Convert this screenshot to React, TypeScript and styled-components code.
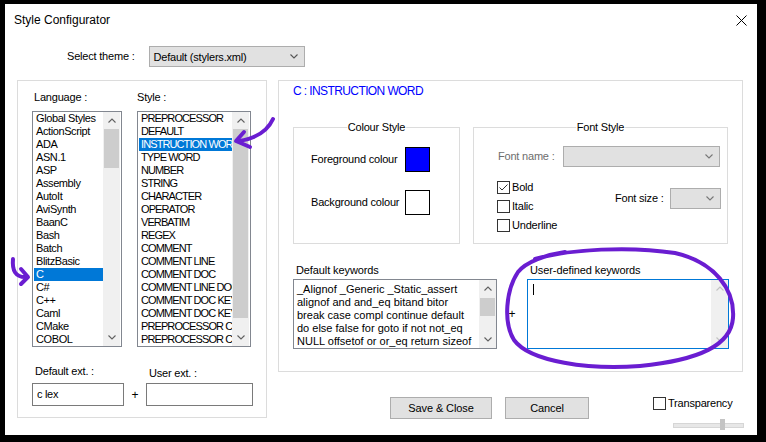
import React from "react";
import styled, { createGlobalStyle } from "styled-components";

const FONT = `"Liberation Sans", Arial, sans-serif`;

const Global = createGlobalStyle`
  html, body { margin: 0; padding: 0; background: #000; }
  body { font-family: ${FONT}; font-size: 11px; color: #000; }
  * { box-sizing: border-box; }
`;

const Dialog = styled.div`
  position: relative;
  margin: 4px 0 0 5px;
  width: 752px;
  height: 431px;
  background: #fff;
  display: flex;
  flex-direction: column;
`;

const TitleBar = styled.div`
  height: 32px;
  flex: none;
  display: flex;
  align-items: center;
  justify-content: space-between;
  padding: 0 10px 0 9px;
  font-size: 12px;
`;

const CloseIcon = () => (
  <svg width="11" height="11" viewBox="0 0 11 11">
    <path d="M0.5 0.5 L10.5 10.5 M10.5 0.5 L0.5 10.5" stroke="#000" strokeWidth="1" />
  </svg>
);

const ThemeRow = styled.div`
  margin-top: 10px;
  height: 21px;
  flex: none;
  display: flex;
  align-items: center;
  gap: 14px;
  padding-left: 62px;
`;

const Label = styled.span<{ $muted?: boolean }>`
  line-height: 13px;
  letter-spacing: -0.2px;
  white-space: nowrap;
  color: ${(p) => (p.$muted ? "#6d6d6d" : "#000")};
`;

const Combo = styled.div<{ $w: number }>`
  width: ${(p) => p.$w}px;
  height: 21px;
  background: #e1e1e1;
  border: 1px solid #adadad;
  display: flex;
  align-items: center;
  justify-content: space-between;
  padding: 0 6px 0 4px;
  letter-spacing: -0.2px;
`;

const Chevron = ({ up, color = "#555" }: { up?: boolean; color?: string }) => (
  <svg width="8" height="5" viewBox="0 0 8 5">
    <polyline
      points={up ? "0.5,4.5 4,1 7.5,4.5" : "0.5,0.5 4,4 7.5,0.5"}
      fill="none"
      stroke={color}
      strokeWidth="1.1"
    />
  </svg>
);

const Body = styled.div`
  margin-top: 13px;
  display: grid;
  grid-template-columns: 250px 465px;
  column-gap: 11px;
  padding-left: 12px;
  align-items: start;
`;

const LeftPanel = styled.div`
  height: 338px;
  border: 1px solid #dcdcdc;
  padding: 10px 0 0 14px;
`;

const ListsGrid = styled.div`
  display: grid;
  grid-template-columns: 90px 114px;
  column-gap: 15px;
  row-gap: 7px;
`;

const ListLabel = styled(Label)<{ $shift: number }>`
  padding-left: ${(p) => p.$shift}px;
`;

const ListBox = styled.div<{ $tight?: boolean }>`
  height: 236px;
  border: 1px solid #828790;
  padding: 0 1px;
  display: flex;
  overflow: hidden;
  letter-spacing: ${(p) => (p.$tight ? "-0.9px" : "-0.4px")};
`;

const Items = styled.div`
  flex: 1;
  min-width: 0;
  overflow: hidden;
`;

const Item = styled.div<{ $selected?: boolean }>`
  height: 13px;
  line-height: 13px;
  padding-left: 2px;
  white-space: nowrap;
  overflow: hidden;
  background: ${(p) => (p.$selected ? "#0078d7" : "transparent")};
  color: ${(p) => (p.$selected ? "#fff" : "#000")};
`;

const ScrollBar = styled.div`
  width: 17px;
  flex: none;
  display: flex;
  flex-direction: column;
  background: #f0f0f0;
`;

const ScrollButton = styled.div`
  height: 17px;
  flex: none;
  display: flex;
  align-items: center;
  justify-content: center;
`;

const Track = styled.div`
  flex: 1;
  min-height: 0;
`;

const Thumb = styled.div<{ $top: number; $height: number }>`
  margin: ${(p) => p.$top}px 1px 0;
  height: ${(p) => p.$height}px;
  background: #cdcdcd;
`;

const Scroll = ({
  top,
  height,
  disabled,
}: {
  top?: number;
  height?: number;
  disabled?: boolean;
}) => (
  <ScrollBar>
    <ScrollButton>
      <Chevron up color={disabled ? "#c2c2c2" : "#606060"} />
    </ScrollButton>
    <Track>{!disabled && <Thumb $top={top ?? 0} $height={height ?? 20} />}</Track>
    <ScrollButton>
      <Chevron color={disabled ? "#c2c2c2" : "#606060"} />
    </ScrollButton>
  </ScrollBar>
);

const ExtGrid = styled.div`
  margin-top: 18px;
  display: grid;
  grid-template-columns: 92px 22px 107px;
  grid-template-rows: 15px 23px;
  row-gap: 3px;
  align-items: start;
`;

const ExtLabel = styled(Label)<{ $down?: number }>`
  padding-left: 3px;
  margin-top: ${(p) => p.$down ?? 0}px;
`;

const TextInput = styled.div`
  height: 23px;
  border: 1px solid #7a7a7a;
  padding-left: 4px;
  line-height: 20px;
  letter-spacing: -0.3px;
`;

const Plus = styled.span`
  align-self: center;
  justify-self: center;
  font-size: 12px;
`;

const RightColumn = styled.div`
  display: flex;
  flex-direction: column;
`;

const RightPanel = styled.div`
  height: 292px;
  border: 1px solid #dcdcdc;
  padding: 3px 0 0 14px;
`;

const StyleTitle = styled.div`
  color: #0000ff;
  font-size: 12px;
  line-height: 14px;
  letter-spacing: -0.6px;
`;

const GroupsRow = styled.div`
  margin-top: 29px;
  display: flex;
  gap: 13px;
`;

const Group = styled.div<{ $w: number }>`
  position: relative;
  width: ${(p) => p.$w}px;
  height: 117px;
  border: 1px solid #dcdcdc;
`;

const GroupCaption = styled.span`
  position: absolute;
  top: -7px;
  left: 50%;
  transform: translateX(-50%);
  padding: 0 1px;
  background: #fff;
  line-height: 13px;
  letter-spacing: -0.2px;
  white-space: nowrap;
`;

const ColourGrid = styled.div`
  margin: 19px 0 0 17px;
  display: grid;
  grid-template-columns: 94px 25px;
  row-gap: 18px;
  align-items: center;
`;

const Swatch = styled.div<{ $color: string }>`
  width: 25px;
  height: 25px;
  border: 1px solid #000;
  background: ${(p) => p.$color};
`;

const FontNameRow = styled.div`
  margin: 18px 0 0 24px;
  display: grid;
  grid-template-columns: 65px 157px;
  align-items: center;
`;

const FontLower = styled.div`
  margin-top: 14px;
  display: flex;
  padding: 0 6px 0 23px;
  align-items: flex-start;
`;

const CheckColumn = styled.div`
  display: flex;
  flex-direction: column;
  gap: 6px;
`;

const CheckRow = styled.div`
  display: flex;
  align-items: center;
  gap: 2px;
  height: 13px;
`;

const Box = styled.div`
  width: 13px;
  height: 13px;
  border: 1px solid #333;
  background: #fff;
  display: flex;
  align-items: center;
  justify-content: center;
`;

const Check = ({ checked, label }: { checked?: boolean; label: string }) => (
  <CheckRow>
    <Box>
      {checked && (
        <svg width="11" height="11" viewBox="0 0 11 11">
          <polyline points="1.5,5.5 4,8 9.5,2.5" fill="none" stroke="#333" strokeWidth="1" />
        </svg>
      )}
    </Box>
    <Label>{label}</Label>
  </CheckRow>
);

const SizeRow = styled.div`
  margin: 7px 0 0 auto;
  display: grid;
  grid-template-columns: 55px 51px;
  align-items: center;
`;

const KeywordsGrid = styled.div`
  margin-top: 20px;
  display: grid;
  grid-template-columns: 204px 30px 202px;
  grid-template-rows: 13px 70px;
  row-gap: 2px;
`;

const KwLabel = styled(Label)`
  padding-left: 3px;
  letter-spacing: -0.1px;
`;

const KeywordBox = styled.div<{ $focused?: boolean }>`
  height: 70px;
  border: 1px solid ${(p) => (p.$focused ? "#0078d7" : "#828790")};
  display: flex;
  background: #fff;
`;

const KeywordText = styled.div`
  flex: 1;
  min-width: 0;
  padding: 3px 0 0 3px;
  overflow: hidden;
  line-height: 13px;
  white-space: nowrap;
`;

const Caret = styled.div`
  width: 1px;
  height: 11px;
  margin: 1px 0 0 2px;
  background: #000;
`;

const BottomBar = styled.div`
  display: flex;
  align-items: flex-start;
  padding: 25px 0 0 112px;
  gap: 13px;
`;

const Button = styled.button<{ $w: number }>`
  width: ${(p) => p.$w}px;
  height: 22px;
  padding: 0;
  background: #e1e1e1;
  border: 1px solid #adadad;
  font-family: ${FONT};
  font-size: 11px;
  letter-spacing: -0.1px;
  color: #000;
`;

const TransparencyBox = styled.div`
  margin: 0 -1px 0 auto;
  width: 91px;
  display: flex;
  flex-direction: column;
  gap: 9px;
`;

const Slider = styled.div`
  position: relative;
  margin-left: 20px;
  width: 71px;
  height: 11px;
  padding-top: 4px;
`;

const SliderTrack = styled.div`
  height: 5px;
  background: #e7e7e7;
  border: 1px solid #d6d6d6;
`;

const SliderThumb = styled.div`
  position: absolute;
  left: 47px;
  top: 0;
  width: 5px;
  height: 11px;
  background: #c4c4c4;
`;

const Annotations = styled.svg`
  position: absolute;
  left: -5px;
  top: -4px;
  pointer-events: none;
`;

const languages = [
  "Global Styles",
  "ActionScript",
  "ADA",
  "ASN.1",
  "ASP",
  "Assembly",
  "AutoIt",
  "AviSynth",
  "BaanC",
  "Bash",
  "Batch",
  "BlitzBasic",
  "C",
  "C#",
  "C++",
  "Caml",
  "CMake",
  "COBOL",
];

const styles = [
  "PREPROCESSOR",
  "DEFAULT",
  "INSTRUCTION WORD",
  "TYPE WORD",
  "NUMBER",
  "STRING",
  "CHARACTER",
  "OPERATOR",
  "VERBATIM",
  "REGEX",
  "COMMENT",
  "COMMENT LINE",
  "COMMENT DOC",
  "COMMENT LINE DOC",
  "COMMENT DOC KEYWORD",
  "COMMENT DOC KEYWORD ERROR",
  "PREPROCESSOR COMMENT",
  "PREPROCESSOR COMMENT DOC",
];

const keywordLines = [
  "_Alignof _Generic _Static_assert",
  "alignof and and_eq bitand bitor",
  "break case compl continue default",
  "do else false for goto if not not_eq",
  "NULL offsetof or or_eq return sizeof",
];

const PURPLE = "#6a1dd1";

export default function App() {
  return (
    <>
      <Global />
      <Dialog>
        <TitleBar>
          <span>Style Configurator</span>
          <CloseIcon />
        </TitleBar>
        <ThemeRow>
          <Label>Select theme :</Label>
          <Combo $w={156}>
            <span>Default (stylers.xml)</span>
            <Chevron />
          </Combo>
        </ThemeRow>
        <Body>
          <LeftPanel>
            <ListsGrid>
              <ListLabel $shift={2}>Language :</ListLabel>
              <ListLabel $shift={0}>Style :</ListLabel>
              <ListBox>
                <Items>
                  {languages.map((l) => (
                    <Item key={l} $selected={l === "C"}>
                      {l}
                    </Item>
                  ))}
                </Items>
                <Scroll top={0} height={39} />
              </ListBox>
              <ListBox $tight>
                <Items>
                  {styles.map((s) => (
                    <Item key={s} $selected={s === "INSTRUCTION WORD"}>
                      {s}
                    </Item>
                  ))}
                </Items>
                <Scroll top={0} height={189} />
              </ListBox>
            </ListsGrid>
            <ExtGrid>
              <ExtLabel>Default ext. :</ExtLabel>
              <span />
              <ExtLabel $down={2}>User ext. :</ExtLabel>
              <TextInput>c lex</TextInput>
              <Plus>+</Plus>
              <TextInput />
            </ExtGrid>
          </LeftPanel>
          <RightColumn>
            <RightPanel>
              <StyleTitle>C : INSTRUCTION WORD</StyleTitle>
              <GroupsRow>
                <Group $w={167}>
                  <GroupCaption>Colour Style</GroupCaption>
                  <ColourGrid>
                    <Label>Foreground colour</Label>
                    <Swatch $color="#0000ff" />
                    <Label>Background colour</Label>
                    <Swatch $color="#ffffff" />
                  </ColourGrid>
                </Group>
                <Group $w={255}>
                  <GroupCaption>Font Style</GroupCaption>
                  <FontNameRow>
                    <Label $muted>Font name :</Label>
                    <Combo $w={157}>
                      <span />
                      <Chevron color="#777" />
                    </Combo>
                  </FontNameRow>
                  <FontLower>
                    <CheckColumn>
                      <Check checked label="Bold" />
                      <Check label="Italic" />
                      <Check label="Underline" />
                    </CheckColumn>
                    <SizeRow>
                      <Label>Font size :</Label>
                      <Combo $w={51}>
                        <span />
                        <Chevron color="#777" />
                      </Combo>
                    </SizeRow>
                  </FontLower>
                </Group>
              </GroupsRow>
              <KeywordsGrid>
                <KwLabel>Default keywords</KwLabel>
                <span />
                <KwLabel>User-defined keywords</KwLabel>
                <KeywordBox>
                  <KeywordText>
                    {keywordLines.map((k) => (
                      <div key={k}>{k}</div>
                    ))}
                  </KeywordText>
                  <Scroll top={1} height={18} />
                </KeywordBox>
                <Plus>+</Plus>
                <KeywordBox $focused>
                  <KeywordText>
                    <Caret />
                  </KeywordText>
                  <Scroll disabled />
                </KeywordBox>
              </KeywordsGrid>
            </RightPanel>
            <BottomBar>
              <Button $w={102}>Save &amp; Close</Button>
              <Button $w={84}>Cancel</Button>
              <TransparencyBox>
                <Check label="Transparency" />
                <Slider>
                  <SliderTrack />
                  <SliderThumb />
                </Slider>
              </TransparencyBox>
            </BottomBar>
          </RightColumn>
        </Body>
        <Annotations width="766" height="442" viewBox="0 0 766 442">
          <g fill="none" stroke={PURPLE} strokeWidth="4" strokeLinecap="round" strokeLinejoin="round">
            <path d="M273 119 C268 130, 258 138, 239 141" />
            <path d="M244 132 L236 141 L250 147" />
            <path d="M13 259 C12 270, 15 278, 27 277" />
            <path d="M21 269 L28 277 L21 284" />
            <path d="M535 259 C570 249, 630 246, 675 253 C715 262, 735 290, 733 318 C731 345, 700 360, 640 366 C590 370, 530 362, 514 340 C503 322, 506 290, 518 272 C526 262, 545 255, 565 252" />
          </g>
        </Annotations>
      </Dialog>
    </>
  );
}
